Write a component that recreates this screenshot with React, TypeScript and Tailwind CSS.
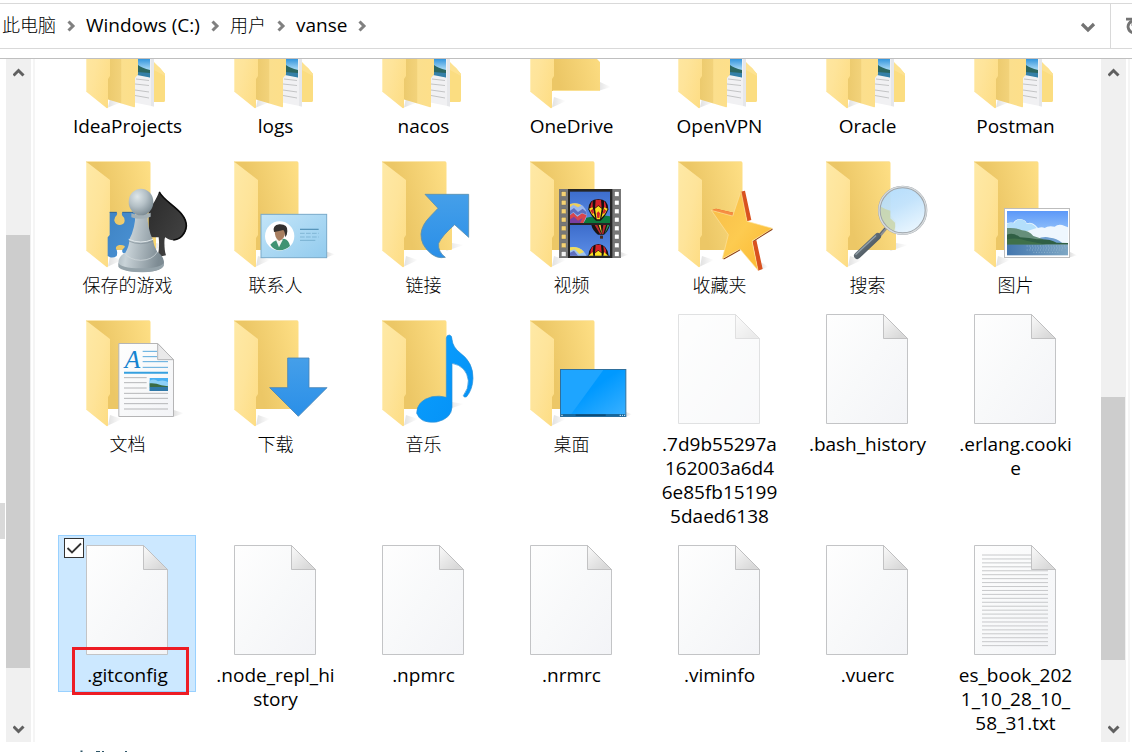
import React, { ReactNode } from "react";

const THIRD = 1 / 3;

function Defs() {
  return (
    <svg width="0" height="0" className="absolute" aria-hidden="true">
      <defs>
        <linearGradient id="flap" x1="0" y1="0" x2="1" y2="1">
          <stop offset="0" stopColor="#fee9a6" />
          <stop offset="0.5" stopColor="#fee49a" />
          <stop offset="1" stopColor="#fddc82" />
        </linearGradient>
        <linearGradient id="back" x1="0" y1="0.6" x2="1" y2="0.3">
          <stop offset="0.3" stopColor="#ecc766" />
          <stop offset="1" stopColor="#fedf85" />
        </linearGradient>
        <linearGradient id="inner" x1="0" y1="0" x2="1" y2="0">
          <stop offset="0" stopColor="#ecca6d" />
          <stop offset="0.42" stopColor="#f2d27a" />
          <stop offset="0.46" stopColor="#fbdf8d" />
          <stop offset="1" stopColor="#fddf8a" />
        </linearGradient>
        <linearGradient id="paper" x1="0" y1="0" x2="1" y2="1">
          <stop offset="0" stopColor="#fefefe" />
          <stop offset="0.5" stopColor="#f8f9fa" />
          <stop offset="1" stopColor="#f3f4f7" />
        </linearGradient>
        <linearGradient id="fold" x1="0" y1="0.3" x2="0.6" y2="1">
          <stop offset="0" stopColor="#f4f4f4" />
          <stop offset="1" stopColor="#d9d9d9" />
        </linearGradient>
        <linearGradient id="shade" x1="0" y1="0" x2="1" y2="0">
          <stop offset="0" stopColor="#000" stopOpacity="0.12" />
          <stop offset="1" stopColor="#000" stopOpacity="0" />
        </linearGradient>
        <linearGradient id="pawn" x1="0" y1="0" x2="1" y2="0.2">
          <stop offset="0" stopColor="#9fadb4" />
          <stop offset="0.3" stopColor="#c9d3d8" />
          <stop offset="1" stopColor="#7d8b93" />
        </linearGradient>
        <radialGradient id="pawnHead" cx="0.35" cy="0.3" r="0.75">
          <stop offset="0" stopColor="#dfe7ea" />
          <stop offset="0.5" stopColor="#b4c0c6" />
          <stop offset="1" stopColor="#7b8a92" />
        </radialGradient>
        <linearGradient id="spade" x1="0" y1="0" x2="1" y2="1">
          <stop offset="0" stopColor="#2a2a2a" />
          <stop offset="1" stopColor="#474747" />
        </linearGradient>
        <linearGradient id="blue" x1="0" y1="0" x2="0" y2="1">
          <stop offset="0" stopColor="#459fe9" />
          <stop offset="1" stopColor="#2a8fe8" />
        </linearGradient>
        <linearGradient id="puzzle" x1="0" y1="0" x2="1" y2="1">
          <stop offset="0" stopColor="#3f83c4" />
          <stop offset="1" stopColor="#4a92d4" />
        </linearGradient>
        <linearGradient id="card" x1="0" y1="0" x2="1" y2="1">
          <stop offset="0" stopColor="#c3e5f8" />
          <stop offset="1" stopColor="#92cbee" />
        </linearGradient>
        <linearGradient id="star" x1="0" y1="0" x2="1" y2="1">
          <stop offset="0" stopColor="#f7bb48" />
          <stop offset="0.5" stopColor="#fdcb50" />
          <stop offset="1" stopColor="#fbb62c" />
        </linearGradient>
        <linearGradient id="lens" x1="0" y1="0" x2="0.5" y2="1">
          <stop offset="0" stopColor="#aedafb" />
          <stop offset="0.5" stopColor="#bfe1fb" />
          <stop offset="1" stopColor="#e3f3fe" />
        </linearGradient>
        <linearGradient id="sky" x1="0" y1="0" x2="0" y2="1">
          <stop offset="0" stopColor="#5c98f8" />
          <stop offset="1" stopColor="#b5dcfb" />
        </linearGradient>
        <linearGradient id="sea" x1="0" y1="0" x2="1" y2="0">
          <stop offset="0" stopColor="#4477ae" />
          <stop offset="1" stopColor="#7ea7c4" />
        </linearGradient>
        <linearGradient id="photo" x1="0" y1="0" x2="0" y2="1">
          <stop offset="0.4" stopColor="#2f93dc" />
          <stop offset="0.72" stopColor="#9fd3f3" />
        </linearGradient>
        <linearGradient id="note" x1="0" y1="0" x2="1" y2="1">
          <stop offset="0" stopColor="#0aa0ff" />
          <stop offset="1" stopColor="#0590f5" />
        </linearGradient>
        <linearGradient id="desk" x1="0" y1="0" x2="1" y2="1">
          <stop offset="0.45" stopColor="#0099ff" />
          <stop offset="1" stopColor="#3cb1ff" />
        </linearGradient>
        <linearGradient id="filmSky" x1="0" y1="0" x2="0" y2="1">
          <stop offset="0" stopColor="#3d6dcc" />
          <stop offset="1" stopColor="#5b8de6" />
        </linearGradient>
        <linearGradient id="handle" x1="0" y1="0" x2="1" y2="1">
          <stop offset="0" stopColor="#7b8790" />
          <stop offset="1" stopColor="#3b464e" />
        </linearGradient>
      </defs>
    </svg>
  );
}

function Frame({ children }: { children: ReactNode }) {
  return (
    <svg viewBox="0 0 138 128" className="block h-32 w-full" aria-hidden="true">
      {children}
    </svg>
  );
}

function Flap() {
  return (
    <>
      <path d="M28 16.500L52 35V90L50 93V121.500Q49.500 122.500 48.500 122L28 105.500Z" fill="url(#flap)" />
      <path d="M28.500 18V105.500" stroke="#fff0c0" strokeWidth="0.8" />
    </>
  );
}

function Folder({ dx = 0, dy = 5, children }: { dx?: number; dy?: number; children?: ReactNode }) {
  return (
    <Frame>
      <path d="M50 121.500L64 115L52 111Z" fill="url(#shade)" />
      <path d="M92 106L110 100L98 98Z" fill="url(#shade)" />
      <path d="M28 16.500H91Q92.500 16.500 92.500 18V70L98 77V104Q98 105 97 105H50L28 90Z" fill="url(#back)" />
      <path d="M28.500 16.500H91.500" stroke="#fbe6ae" strokeWidth="1" />
      <Flap />
      <g transform={`translate(${dx} ${dy}) scale(${THIRD})`}>{children}</g>
    </Frame>
  );
}

function FullFolder() {
  return (
    <Frame>
      <path d="M50 121.500L64 116L52 112Z" fill="url(#shade)" />
      <path d="M94 30V76L102 82L107 88V114.500Q107 116 105.500 116H90V30Z" fill="#fbdd81" />
      <path d="M96 30V76L102 82L107 88V90L96 84Z" fill="#fde291" />
      <path d="M74 30L96 36V120.500L74 116Z" fill="#f1f1f3" />
      <path d="M93 36L96 36V120.500L93 120Z" fill="#e6e7ea" />
      <path d="M80 60L92 62V91.500L80 88Z" fill="url(#photo)" />
      <path d="M80 79Q84 82 92 84V88H80Z" fill="#2b6660" />
      <path d="M79 86L92 87V91.500L79 89Z" fill="#3580a8" />
      <path d="M78 93L91 94.500M77 98L91 99.500M77 104L91 106M77 109.500L91 112" stroke="#bdbec0" strokeWidth="0.9" />
      <path d="M50 28L80 36V88.500L77 92V120.500Q77 121.500 76 121.200L50 113.500Z" fill="url(#inner)" />
      <Flap />
    </Frame>
  );
}

function OneDriveFolder() {
  return (
    <Frame>
      <path d="M50 121.500L64 115L52 111Z" fill="url(#shade)" />
      <path d="M96 105L109 101L98 96Z" fill="url(#shade)" />
      <path d="M28 16.500H93V71L98 76V104Q98 105 97 105H50L28 90Z" fill="url(#back)" />
      <path d="M51 104.500H97" stroke="#fde49c" strokeWidth="0.8" />
      <Flap />
    </Frame>
  );
}

function FileIcon({ faded = false, lined = false }: { faded?: boolean; lined?: boolean }) {
  const rows = Array.from({ length: 24 }, (_, i) => 20 + i * 3.94);
  return (
    <Frame>
      <g opacity={faded ? 0.5 : 1}>
        <path d="M28.500 10.500H85.500L109.500 34.500V119.500H28.500Z" fill="url(#paper)" stroke="#c3c4c6" />
        {lined &&
          rows.map((y, i) => (
            <path key={i} d={`M36 ${y}H${i < 4 ? 86 : 102}`} stroke="#c2c3c5" strokeWidth="0.9" />
          ))}
        <path d="M85.500 10.500L109.500 34.500H85.500Z" fill="url(#fold)" stroke="#bcbcbd" strokeWidth="0.9" />
      </g>
    </Frame>
  );
}

function GamesIcon() {
  return (
    <Folder dx={12}>
      <path
        d="M119 187H140Q143 189 140 196Q132 202 133 212Q137 225 150 225Q163 223 164 212Q164 202 157 197Q154 190 157 187H195V310H160Q154 305 158 298Q166 292 164 288Q158 284 148 285Q136 288 138 296Q144 304 140 318Q132 324 120 322L113 318V262L119 255Z"
        fill="url(#puzzle)"
      />
      <path d="M119 187H140M157 187H190" stroke="#2d6398" strokeWidth="3" />
      <path
        d="M268 124C285 160 350 180 350 228C350 262 312 284 286 262C282 262 282 300 288 316L262 322C268 300 268 280 266 262L236 262L236 180Q258 152 268 124Z"
        fill="url(#spade)"
      />
      <path d="M268 126C285 160 349 182 349 228C347 250 332 268 310 270" stroke="#0b0b0b" strokeWidth="5" fill="none" />
      <path d="M248 266H257V300L248 290Z" fill="#fbd86f" />
      <path
        d="M196 190H232Q232 235 248 268Q252 290 262 306Q282 318 282 340Q282 358 250 364Q212 370 170 362Q144 356 145 338Q146 318 166 308Q178 290 178 268Q196 235 196 190Z"
        fill="url(#pawn)"
      />
      <path d="M145 338Q150 354 212 355Q275 354 281 338V348Q270 366 212 366Q155 365 145 350Z" fill="#95a3aa" />
      <path d="M164 310Q180 330 212 331Q248 330 262 306" stroke="#d5dde0" strokeWidth="2" fill="none" />
      <path d="M176 268Q212 284 249 268" stroke="#dfe6e9" strokeWidth="3" fill="none" />
      <path d="M176 273Q212 289 250 273" stroke="#7f8d95" strokeWidth="2" fill="none" />
      <path d="M184 190Q212 200 242 188V200Q212 212 184 202Z" fill="#a3b0b6" />
      <ellipse cx="213" cy="156" rx="37" ry="40" fill="url(#pawnHead)" />
    </Folder>
  );
}

function ContactsIcon() {
  return (
    <Folder dx={-136}>
      <path d="M771 322L795 313L771 305Z" fill="url(#shade)" />
      <rect x="573" y="193" width="197" height="130" fill="url(#card)" stroke="#78a9c9" strokeWidth="3" />
      <circle cx="629" cy="258" r="44" fill="#fff" />
      <path d="M601 284Q606 276 620 270L642 266Q656 268 660 288Q648 300 629 301Q610 300 601 284Z" fill="#3f9373" />
      <path d="M618 270L627 292L638 270L634 260H622Z" fill="#f3f4f0" />
      <path d="M614 240Q614 266 627 273Q644 268 646 246Q640 232 622 234Z" fill="#a87f60" />
      <path d="M612 246Q606 226 628 223Q654 222 652 244Q652 256 645 262Q647 248 640 240Q622 244 612 246Z" fill="#33302e" />
      <path d="M690 238H746" stroke="#4f8fb5" strokeWidth="3.500" />
      <path d="M690 250H746M690 261H746" stroke="#78b0d0" strokeWidth="2.500" strokeDasharray="14 4" />
      <path d="M690 271H736" stroke="#78b0d0" strokeWidth="3" />
    </Folder>
  );
}

function LinksIcon() {
  return (
    <Folder dx={16}>
      <path
        d="M165 133H296V262L254 224Q215 258 206 280Q203 305 226 322Q200 327 180 308Q152 285 153 252Q155 225 180 200L204 175Z"
        fill="url(#blue)"
        stroke="#5a8fae"
        strokeWidth="2.500"
      />
    </Folder>
  );
}

function BalloonStripes() {
  return (
    <>
      <path d="M655 178Q656 147 685 147Q714 147 715 178Q708 198 692 212H678Q662 198 655 178Z" fill="#171010" />
      <path d="M664 158Q660 168 661 180L668 172L668 152ZM706 158Q710 168 709 180L702 172L702 152ZM677 149H693L695 174L685 166L675 174Z" fill="#d3222a" />
      <path d="M657 176L668 172L672 190L676 204Q664 194 657 176ZM713 176L702 172L698 190L694 204Q706 194 713 176ZM675 176L685 168L695 176L690 208H680Z" fill="#fbe01f" />
      <path d="M661 182L668 176L672 188L668 192ZM709 182L702 176L698 188L702 192ZM680 190L685 184L690 190L688 204H682Z" fill="#d3222a" />
    </>
  );
}

function VideosIcon() {
  const holes = [125, 151, 177, 202, 228, 253, 279, 305];
  return (
    <Folder dx={-132}>
      <path d="M752 322L776 314L752 306Z" fill="url(#shade)" />
      <rect x="567" y="117" width="186" height="207" fill="#777" />
      <rect x="594" y="117" width="133" height="207" fill="#252525" />
      {holes.map((y) => (
        <g key={y}>
          <rect x="574" y={y} width="14" height="14" fill={y < 300 ? "#f6d272" : "#f3f3f3"} stroke="#5b5b5b" strokeWidth="1" />
          <rect x="734" y={y} width="13" height="14" fill="#fff" stroke="#5b5b5b" strokeWidth="1" />
        </g>
      ))}
      <rect x="600" y="125" width="120" height="94" fill="url(#filmSky)" />
      <path d="M645 204Q690 192 720 199V219H640Z" fill="#0d7a3d" />
      <path d="M600 163Q640 150 651 190Q650 208 640 219H600Z" fill="#9ab7ee" />
      <path d="M600 182L612 174L624 186L638 176L649 186L650 194L636 188L622 196L610 186L600 194Z" fill="#5c6fc0" />
      <path d="M600 196L610 188L622 200L636 190L650 196L640 219H600Z" fill="#d8464c" />
      <path d="M600 208L612 200L624 212L638 204L630 219H600Z" fill="#7b3fa0" />
      <path d="M600 162Q618 156 634 166L624 172L610 164L600 172Z" fill="#f0cf5a" />
      <BalloonStripes />
      <rect x="600" y="225" width="120" height="92" fill="url(#filmSky)" />
      <path d="M664 225H720Q714 245 702 254H684Q668 242 664 225Z" fill="#1b1512" />
      <path d="M674 225H682L694 252H690ZM700 225H708L700 252H696Z" fill="#b92a30" />
      <path d="M686 225H692L696 252Z" fill="#e9cf31" />
      <path d="M712 225H718L704 252Z" fill="#2c9a5b" />
      <rect x="690" y="257" width="9" height="9" fill="#4b2c17" />
      <path d="M600 294Q632 284 650 317H600Z" fill="#9fc2ec" />
      <path d="M600 292Q626 288 642 306L628 312L614 298L600 302Z" fill="#f0dc5a" />
      <path d="M600 308L612 302L624 317H600Z" fill="#5f6fbe" />
      <path d="M655 317Q658 284 685 282Q712 284 716 317Z" fill="#171010" />
      <path d="M662 300Q666 290 670 288L668 308L661 312ZM708 300Q704 290 700 288L702 308L709 312ZM677 284H693L695 308L685 300L675 308Z" fill="#d3222a" />
      <path d="M657 316L668 306L670 317H657ZM713 316L702 306L700 317H713ZM675 310L685 302L695 310V317H675Z" fill="#fbe01f" />
    </Folder>
  );
}

function FavoritesIcon() {
  return (
    <Folder dx={15}>
      <path d="M285 360L310 350L290 338Z" fill="url(#shade)" />
      <path d="M226 125L240 122L259 210L246 214ZM140 181L153 176L205 188L203 198ZM262 274L274 270L293 357L279 362Z" fill="#d9521f" />
      <path d="M140 181L153 176L205 188L203 198Z" fill="#f78d42" />
      <path d="M262 274L321 234L323 239L270 272ZM172 327L225 296L226 301L178 328Z" fill="#8a3d12" />
      <path
        d="M228 124L246 214L322 235L261 273L279 361L225 297L172 326L190 254L139 181L203 198Z"
        fill="url(#star)"
        stroke="#fde29c"
        strokeWidth="2"
      />
    </Folder>
  );
}

function SearchIcon() {
  return (
    <Folder dx={-133}>
      <path d="M662 235L636 266" stroke="#8b8f93" strokeWidth="10" />
      <path d="M660 234L634 264" stroke="#555c62" strokeWidth="3" />
      <path d="M638 259L577 317" stroke="url(#handle)" strokeWidth="20" strokeLinecap="round" />
      <path d="M632 258L573 313" stroke="#93a0a9" strokeWidth="4" strokeLinecap="round" />
      <circle cx="713" cy="181" r="69" fill="url(#lens)" opacity="0.93" />
      <path d="M648 170Q660 178 676 182V205L690 218Q692 232 688 244Q650 228 646 185Z" fill="#c9d3a0" opacity="0.75" />
      <circle cx="713" cy="181" r="70" fill="none" stroke="#9da3a8" strokeWidth="8" />
      <circle cx="713" cy="181" r="71" fill="none" stroke="#d8dcdf" strokeWidth="4" />
    </Folder>
  );
}

function PicturesIcon() {
  return (
    <Folder dx={14}>
      <path d="M330 322L352 316L330 306Z" fill="url(#shade)" />
      <rect x="133.500" y="175.500" width="195" height="147" fill="#fff" stroke="#bdbdbd" strokeWidth="3" />
      <rect x="141" y="183" width="183" height="100" fill="url(#sky)" />
      <path d="M141 220Q150 216 160 218Q166 206 182 207Q198 210 200 220Q216 214 226 226L234 234Q246 230 254 234Q264 226 284 230Q296 220 314 228L324 232V283H141Z" fill="#eef7fe" />
      <path d="M141 222Q150 216 162 220Q168 208 182 208Q196 210 200 222Q216 216 230 234L200 244H141Z" fill="#b4dffb" />
      <path d="M230 268Q250 258 270 263Q290 265 306 278L300 283H220Z" fill="#6f9fd0" />
      <path d="M141 234Q168 232 186 241Q206 242 220 258L250 268V283H141Z" fill="#668f7b" />
      <path d="M141 254Q160 246 180 262Q210 264 230 268Q270 266 290 278L324 279V284H141Z" fill="#2f5f44" />
      <path d="M141 268Q170 262 200 272L260 284H141Z" fill="#3f7049" />
      <rect x="141" y="284" width="183" height="32" fill="url(#sea)" />
      <path d="M200 288H324M210 294H318M200 300H312M220 307H300" stroke="#a4c4d6" strokeWidth="2" strokeDasharray="3 5" />
    </Folder>
  );
}

function DocumentsIcon() {
  return (
    <Folder dx={12} dy={6}>
      <path d="M311 320L342 310L311 300Z" fill="url(#shade)" />
      <path d="M146.500 100.500H263L310.500 149V319.500H146.500Z" fill="url(#paper)" stroke="#b5b5b6" strokeWidth="3" />
      <path d="M263 100.500L310.500 149H263Z" fill="#e9e9ea" stroke="#b5b5b6" strokeWidth="3" />
      <text x="164" y="173" fontFamily="Liberation Serif, serif" fontStyle="italic" fontSize="76" fill="#1583cf">
        A
      </text>
      <path d="M218 124H261M218 140H261M218 155H294M218 172H294" stroke="#5aa9dc" strokeWidth="3" />
      <path d="M162 188H294" stroke="#36a0df" strokeWidth="6" />
      <path d="M162 203H230M162 218H230M162 234H230M162 250H294M162 265H294M162 281H294M162 297H294" stroke="#b5b6b8" strokeWidth="3" />
      <rect x="239" y="204" width="55" height="39" fill="#49b0f2" />
      <path d="M239 212Q254 204 264 214Q280 208 294 216V228H239Z" fill="#8dd0f7" />
      <path d="M239 220Q256 218 274 226L294 229V232H239Z" fill="#3a6b45" />
      <path d="M239 231H294V243H239Z" fill="#2f78a8" />
    </Folder>
  );
}

function DownloadsIcon() {
  return (
    <Folder dx={-136} dy={6}>
      <path d="M653 144H717V233H771L685 319L599 233H653Z" fill="url(#blue)" stroke="#4b86b5" strokeWidth="2.500" />
    </Folder>
  );
}

function MusicIcon() {
  return (
    <Folder dx={16} dy={6}>
      <path
        d="M229 84Q230 75 238 75Q246 76 246 88Q248 112 272 130Q310 158 309 205Q308 238 290 260Q282 264 280 257Q296 236 295 212Q290 168 246 160V292Q244 326 200 336Q152 342 140 310Q140 272 186 260Q208 256 229 262Z"
        fill="url(#note)"
        stroke="#2c8fd6"
        strokeWidth="2"
      />
    </Folder>
  );
}

function DesktopIcon() {
  return (
    <Folder dx={-132} dy={6}>
      <path d="M768 320L786 313L768 306Z" fill="url(#shade)" />
      <rect x="571.500" y="178.500" width="196" height="141" fill="url(#desk)" stroke="#2f6f9c" strokeWidth="3" />
      <path d="M573 180H700L604 312H573Z" fill="#1ea5ff" />
      <rect x="573" y="312" width="193" height="7" fill="#17689d" />
      <rect x="617" y="313" width="90" height="5" fill="#0d4c78" />
      <path d="M574 316H578M749 316H753M756 316H759M762 316H765" stroke="#e9f5ff" strokeWidth="3" />
    </Folder>
  );
}

type Item = { lines: string[]; icon: ReactNode; selected?: boolean; cjk?: boolean };

const items: Item[] = [
  { lines: ["IdeaProjects"], icon: <FullFolder /> },
  { lines: ["logs"], icon: <FullFolder /> },
  { lines: ["nacos"], icon: <FullFolder /> },
  { lines: ["OneDrive"], icon: <OneDriveFolder /> },
  { lines: ["OpenVPN"], icon: <FullFolder /> },
  { lines: ["Oracle"], icon: <FullFolder /> },
  { lines: ["Postman"], icon: <FullFolder /> },
  { lines: ["保存的游戏"], icon: <GamesIcon />, cjk: true },
  { lines: ["联系人"], icon: <ContactsIcon />, cjk: true },
  { lines: ["链接"], icon: <LinksIcon />, cjk: true },
  { lines: ["视频"], icon: <VideosIcon />, cjk: true },
  { lines: ["收藏夹"], icon: <FavoritesIcon />, cjk: true },
  { lines: ["搜索"], icon: <SearchIcon />, cjk: true },
  { lines: ["图片"], icon: <PicturesIcon />, cjk: true },
  { lines: ["文档"], icon: <DocumentsIcon />, cjk: true },
  { lines: ["下载"], icon: <DownloadsIcon />, cjk: true },
  { lines: ["音乐"], icon: <MusicIcon />, cjk: true },
  { lines: ["桌面"], icon: <DesktopIcon />, cjk: true },
  { lines: [".7d9b55297a", "162003a6d4", "6e85fb15199", "5daed6138"], icon: <FileIcon faded /> },
  { lines: [".bash_history"], icon: <FileIcon /> },
  { lines: [".erlang.cooki", "e"], icon: <FileIcon /> },
  { lines: [".gitconfig"], icon: <FileIcon />, selected: true },
  { lines: [".node_repl_hi", "story"], icon: <FileIcon /> },
  { lines: [".npmrc"], icon: <FileIcon /> },
  { lines: [".nrmrc"], icon: <FileIcon /> },
  { lines: [".viminfo"], icon: <FileIcon /> },
  { lines: [".vuerc"], icon: <FileIcon /> },
  { lines: ["es_book_202", "1_10_28_10_", "58_31.txt"], icon: <FileIcon lined /> },
];

function Tile({ item }: { item: Item }) {
  return (
    <li className="relative">
      <button
        type="button"
        className={
          item.selected
            ? "block w-full bg-[#cce8ff] pb-[5px] outline outline-1 -outline-offset-1 outline-[#99d1ff]"
            : "block w-full pb-[5px]"
        }
      >
        {item.icon}
        <span className={item.cjk ? "block pl-px text-lg leading-6 font-light" : "block pl-px text-[19px] leading-6"}>
          {item.lines.map((line) => (
            <span key={line} className="block whitespace-nowrap">
              {line}
            </span>
          ))}
        </span>
      </button>
      {item.selected && (
        <>
          <input
            type="checkbox"
            defaultChecked
            aria-label={item.lines[0]}
            className="absolute top-[3px] left-1.5 size-5 appearance-none border border-[#333] bg-white"
          />
          <svg viewBox="0 0 20 20" className="pointer-events-none absolute top-[3px] left-1.5 size-5" aria-hidden="true">
            <path d="M3.500 10L8 14.500L17 5.500" fill="none" stroke="#333" strokeWidth="1.800" />
          </svg>
          <div className="pointer-events-none absolute top-28 left-3.5 h-12 w-[117px] border-3 border-[#ed1c24]" />
        </>
      )}
    </li>
  );
}

function Crumb({ text, cjk = false }: { text: string; cjk?: boolean }) {
  return (
    <li className="flex items-center">
      <a href="#" className={cjk ? "text-lg leading-6 font-light" : "text-[19px] leading-6"}>
        {text}
      </a>
      <svg viewBox="0 0 30 12" className="mt-0.5 h-3 w-[30px]" aria-hidden="true">
        <path d="M12.500 1.500L17 6L12.500 10.500" fill="none" stroke="#808080" strokeWidth="3" />
      </svg>
    </li>
  );
}

function Arrow({ up = false }: { up?: boolean }) {
  return (
    <svg viewBox="0 0 12 10" className="h-2.5 w-3" aria-hidden="true">
      <path d={up ? "M0.500 8.500L5.500 3.500L10.500 8.500" : "M0.500 2.500L5.500 7.500L10.500 2.500"} fill="none" stroke="#606060" strokeWidth="3" />
    </svg>
  );
}

function ScrollBar({ before, thumb, after }: { before: string; thumb: string; after: string }) {
  return (
    <div className="flex shrink-0">
      <div className="flex w-[25px] flex-col bg-[#f0f0f0]">
        <button type="button" aria-label="Scroll up" className="flex h-[26px] items-center justify-center">
          <Arrow up />
        </button>
        <div className={before} />
        <div className={thumb} />
        <div className={after} />
        <button type="button" aria-label="Scroll down" className="flex h-[26px] items-center justify-center">
          <Arrow />
        </button>
      </div>
      <div className="ml-0.5 w-0.5 bg-[#f5f5f5]" />
    </div>
  );
}

export default function App() {
  return (
    <div className="flex h-screen flex-col overflow-hidden bg-white pt-[3px] font-['Open_Sans','Noto_Sans_CJK_SC',sans-serif] text-black">
      <Defs />
      <header className="flex h-[46px] shrink-0 border-y border-[#d9d9d9]">
        <nav aria-label="Address" className="flex min-w-0 flex-1 items-center pb-0.5 pl-0.5">
          <ol className="flex">
            <Crumb text="此电脑" cjk />
            <Crumb text="Windows (C:)" />
            <Crumb text="用户" cjk />
            <Crumb text="vanse" />
          </ol>
        </nav>
        <button type="button" aria-label="Previous locations" className="flex w-11 items-center justify-center pt-0.5">
          <svg viewBox="0 0 16 12" className="h-3 w-4" aria-hidden="true">
            <path d="M2 3L8 9L14 3" fill="none" stroke="#737373" strokeWidth="3.200" />
          </svg>
        </button>
        <button
          type="button"
          aria-label="Refresh"
          className="flex w-[22px] items-center overflow-hidden border-l border-[#d9d9d9] pl-[15px]"
        >
          <svg viewBox="0 0 16 18" className="h-[18px] w-4 shrink-0" aria-hidden="true">
            <path d="M6 4Q2 6 2 10Q3 15.500 8 16Q14 15.500 14 10Q14 7 12 5" fill="none" stroke="#737373" strokeWidth="2.800" />
            <path d="M0 2.200H7V9" fill="none" stroke="#737373" strokeWidth="2.800" />
          </svg>
        </button>
      </header>
      <main className="mt-[9px] flex min-h-0 flex-1 border-t border-[#bfbfbf]">
        <div className="flex w-1.5 shrink-0 flex-col">
          <div className="flex-[443]" />
          <div className="mr-px flex-[36] bg-[#d9d9d9]" />
          <div className="flex-[203]" />
        </div>
        <ScrollBar before="flex-[150]" thumb="mr-px flex-[434] bg-[#cdcdcd]" after="flex-[48]" />
        <div className="min-w-0 flex-1 overflow-hidden pl-[23px]">
          <ul className="-mt-[73px] grid grid-cols-[repeat(auto-fill,138px)] gap-x-2.5 gap-y-0.5">
            {items.map((item) => (
              <Tile key={item.lines[0]} item={item} />
            ))}
          </ul>
        </div>
        <ScrollBar before="flex-[312]" thumb="mr-px flex-[264] bg-[#cdcdcd]" after="flex-[56]" />
        <div className="w-0.5 shrink-0" />
      </main>
      <footer className="flex h-2.5 shrink-0 items-end pl-20">
        <svg viewBox="0 0 48 2" className="h-0.5 w-12" aria-hidden="true">
          <path d="M0.500 0.500H2.500V2H0.500ZM16 1H20V2H16ZM22 1H24V2H22ZM45 1H47V2H45Z" fill="#2f5668" />
        </svg>
      </footer>
    </div>
  );
}
